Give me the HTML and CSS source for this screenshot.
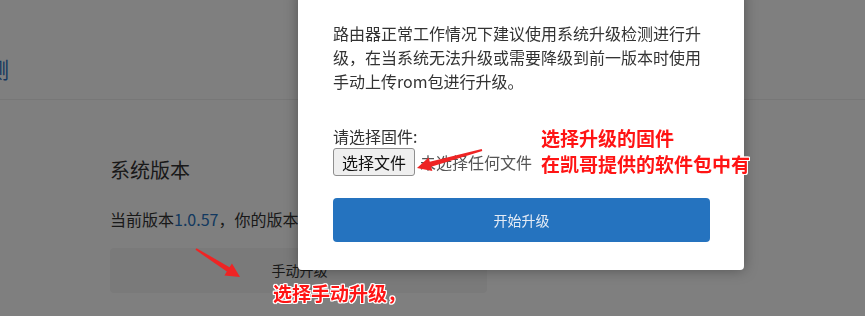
FILE: index.html
```html
<!DOCTYPE html>
<html lang="zh-CN">
<head>
<meta charset="utf-8">
<title>系统升级</title>
<link rel="stylesheet" href="styles.css">
</head>
<body>
<div class="page">
  <header class="header">
    <span class="tab">升级检测</span>
  </header>
  <section class="section">
    <h2 class="title">系统版本</h2>
    <p class="version">当前版本<span class="num">1.0.57</span>，你的版本已是最新版本</p>
    <div class="manual">手动升级</div>
  </section>
</div>
<div class="overlay"></div>
<div class="modal">
  <p class="desc">路由器正常工作情况下建议使用系统升级检测进行升级，在当系统无法升级或需要降级到前一版本时使用手动上传rom包进行升级。</p>
  <div class="label">请选择固件:</div>
  <div class="file-row">
    <span class="file-btn">选择文件</span>
    <span class="file-none">未选择任何文件</span>
  </div>
  <div class="start">开始升级</div>
</div>
<svg class="arrows" width="865" height="316" viewBox="0 0 865 316">
  <polygon points="481.73,149.04 429.83,161.85 428.63,157.51 417,168 432.37,171.01 431.17,166.67 482.27,150.96"/>
  <polygon points="195.46,249.84 226.85,271.59 224.43,275.39 240,277 231.95,263.57 229.53,267.37 196.54,248.16"/>
</svg>
<div class="note note-file">选择升级的固件<br>在凯哥提供的软件包中有</div>
<div class="note note-manual">选择手动升级，</div>
</body>
</html>
```

FILE: styles.css
```css
html, body {
  margin: 0;
  padding: 0;
  width: 865px;
  height: 316px;
  overflow: hidden;
  background: #ffffff;
  font-family: "Noto Sans CJK SC", "Noto Sans", sans-serif;
  color: #333333;
}

.page {
  width: 865px;
}

.header {
  height: 100px;
  box-sizing: border-box;
  padding-top: 54px;
  border-bottom: 1px solid #eeeeee;
}

.tab {
  display: block;
  margin-left: -79px;
  font-size: 22px;
  line-height: 28px;
  color: #2a6fbd;
}

.section {
  padding-left: 110px;
}

.title {
  margin: 56px 0 0;
  font-size: 20px;
  line-height: 28px;
  font-weight: 400;
  color: #333333;
}

.version {
  margin: 23px 0 0;
  font-size: 16px;
  line-height: 24px;
  color: #333333;
  white-space: nowrap;
}

.num {
  color: #2672c0;
}

.manual {
  margin-top: 17px;
  width: 377px;
  height: 45px;
  border-radius: 4px;
  background: #f4f4f4;
  font-size: 14px;
  line-height: 45px;
  text-align: center;
  color: #333333;
  box-sizing: border-box;
  padding-left: 2px;
}

.overlay {
  position: fixed;
  inset: 0;
  background: rgba(0, 0, 0, 0.5);
}

.modal {
  position: absolute;
  left: 298px;
  top: -10px;
  width: 446px;
  box-sizing: border-box;
  padding: 31px 34px 28px 35px;
  background: #ffffff;
  border-radius: 4px;
  box-shadow: 0 0 14px rgba(0, 0, 0, 0.35);
}

.desc {
  margin: 0;
  font-size: 16px;
  line-height: 24px;
  color: #333333;
}

.label {
  margin-top: 31px;
  font-size: 16px;
  line-height: 24px;
  color: #333333;
}

.file-row {
  display: flex;
  align-items: center;
  height: 28px;
}

.file-btn {
  box-sizing: border-box;
  height: 28px;
  padding: 0 8px;
  border: 1px solid #8f8f8f;
  border-radius: 3px;
  background: #efefef;
  font-size: 16px;
  line-height: 26px;
  color: #111111;
}

.file-none {
  margin-left: 5px;
  font-size: 16px;
  line-height: 24px;
  color: #555555;
}

.start {
  margin-top: 22px;
  height: 44px;
  border-radius: 4px;
  background: #2573bf;
  color: #e4ebf5;
  font-size: 14px;
  line-height: 44px;
  text-align: center;
}

.arrows {
  position: absolute;
  left: 0;
  top: 0;
}

.arrows polygon {
  fill: #ee2424;
}

.note {
  position: absolute;
  font-size: 19px;
  line-height: 26px;
  font-weight: 700;
  color: #ff1414;
  white-space: nowrap;
  text-shadow: 0 0 1px #fff, 1px 1px 0 #fff, -1px -1px 0 #fff, 1px -1px 0 #fff, -1px 1px 0 #fff, 0 1px 0 #fff, 0 -1px 0 #fff, 1px 0 0 #fff, -1px 0 0 #fff;
}

.note-file {
  left: 541px;
  top: 125px;
}

.note-manual {
  left: 273px;
  top: 280px;
}
```
